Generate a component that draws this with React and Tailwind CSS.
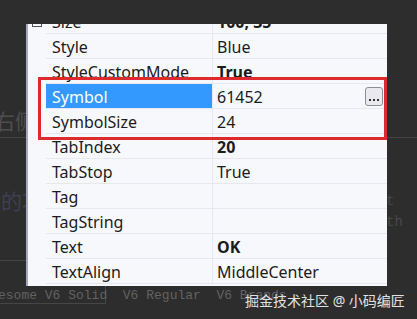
import React from "react";

const rows = [
  { name: "Size", value: "100, 35", bold: true },
  { name: "Style", value: "Blue" },
  { name: "StyleCustomMode", value: "True", bold: true },
  { name: "Symbol", value: "61452", selected: true, button: true },
  { name: "SymbolSize", value: "24" },
  { name: "TabIndex", value: "20", bold: true },
  { name: "TabStop", value: "True" },
  { name: "Tag", value: "" },
  { name: "TagString", value: "" },
  { name: "Text", value: "OK", bold: true },
  { name: "TextAlign", value: "MiddleCenter" },
];

const PropertyRow = ({ row }) => {
  return (
    <div className="flex h-[25px] border-b border-[#e7e8ef]">
      <div
        className={
          row.selected
            ? "w-[166px] flex items-center pl-[6px] pt-px bg-[#3399ff] text-white"
            : "w-[166px] flex items-center pl-[6px] pt-px text-[#1b1b1b]"
        }
      >
        {row.name}
      </div>
      <div className="w-px bg-[#e7e8ef]" />
      <div className="flex-1 flex items-center justify-between pl-[4px] pr-[4px] pt-px text-[#1b1b1b]">
        <span className={row.bold ? "font-bold" : ""}>{row.value}</span>
        {row.button && (
          <button className="w-[18px] h-[19px] flex items-end justify-center pb-[4px] rounded-[3px] border border-[#8d8d95] bg-[#e9e9ee]">
            <span className="flex gap-[2px]">
              <span className="w-[2px] h-[2px] bg-[#333]" />
              <span className="w-[2px] h-[2px] bg-[#333]" />
              <span className="w-[2px] h-[2px] bg-[#333]" />
            </span>
          </button>
        )}
      </div>
    </div>
  );
};

const App = () => {
  return (
    <div className="relative w-[417px] h-[319px] overflow-hidden bg-[#2d2d2d] font-['Noto_Sans','Noto_Sans_CJK_SC',sans-serif]">
      {/* Backdrop behind the property grid */}
      <div className="absolute left-0 right-0 top-[137px] h-px bg-[#434346]" />
      <div className="absolute left-0 w-[30px] top-[260px] h-px bg-[#434346]" />
      <div className="absolute left-[-6px] top-[106px] text-[21px] text-[#4e4e51]">右侧</div>
      <div className="absolute left-[1px] top-[186px] text-[21px] text-[#3f3f50]">的功</div>
      <div className="absolute left-[386px] top-[191px] font-['Liberation_Mono',monospace] text-[14px] text-[#48484c]">t th</div>
      <div className="absolute left-0 top-[286px] w-[106px] h-[18px] border-r border-b border-[#464646]" />
      <div className="absolute left-[-2px] top-[286px] whitespace-pre font-['Liberation_Mono',monospace] text-[13px] text-[#626262]">
        {"esome V6 Solid  V6 Regular  V6 Brands"}
      </div>

      {/* Property grid */}
      <div className="relative ml-[26px] mt-[24px] w-[361px] h-[262px] flex overflow-hidden border-l-2 border-[#a6a6c2] bg-[#f7f8fc] text-[16px]">
        <div className="w-[18px] shrink-0">
          <div className="mt-[-6px] ml-[4px] w-[10px] h-[9px] border border-[#555]" />
        </div>
        <div className="flex-1 flex flex-col mt-[-15px]">
          {rows.map((row) => (
            <PropertyRow key={row.name} row={row} />
          ))}
        </div>
      </div>

      {/* Annotation */}
      <div className="absolute left-[38px] top-[77px] w-[349px] h-[63px] border-[3px] border-[#dd2a2e]" />

      {/* Watermark */}
      <div className="absolute left-[245px] top-[290px] text-[14px] text-[#e2e2e2]">掘金技术社区 @ 小码编匠</div>
    </div>
  );
};

export default App;
